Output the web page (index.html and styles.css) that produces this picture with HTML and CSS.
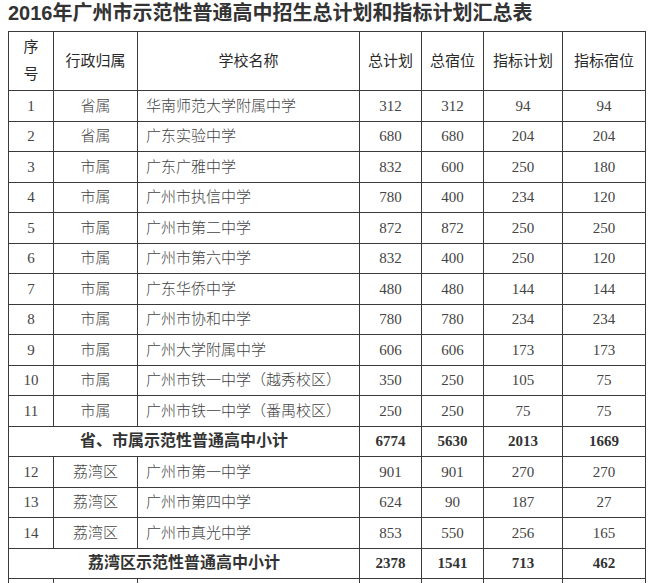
FILE: index.html
```html
<!DOCTYPE html>
<html lang="zh-CN">
<head>
<meta charset="utf-8">
<title>2016年广州市示范性普通高中招生总计划和指标计划汇总表</title>
<link rel="stylesheet" href="styles.css">
</head>
<body>
<h1 class="title">2016年广州市示范性普通高中招生总计划和指标计划汇总表</h1>
<table class="plan">
  <colgroup>
    <col class="c-no"><col class="c-dept"><col class="c-name"><col class="c-total"><col class="c-dorm"><col class="c-quota"><col class="c-qdorm">
  </colgroup>
  <thead>
    <tr class="head">
      <th><span class="stack">序<br>号</span></th>
      <th>行政归属</th>
      <th>学校名称</th>
      <th>总计划</th>
      <th>总宿位</th>
      <th>指标计划</th>
      <th>指标宿位</th>
    </tr>
  </thead>
  <tbody>
    <tr><td>1</td><td>省属</td><td class="name">华南师范大学附属中学</td><td>312</td><td>312</td><td>94</td><td>94</td></tr>
    <tr><td>2</td><td>省属</td><td class="name">广东实验中学</td><td>680</td><td>680</td><td>204</td><td>204</td></tr>
    <tr><td>3</td><td>市属</td><td class="name">广东广雅中学</td><td>832</td><td>600</td><td>250</td><td>180</td></tr>
    <tr><td>4</td><td>市属</td><td class="name">广州市执信中学</td><td>780</td><td>400</td><td>234</td><td>120</td></tr>
    <tr><td>5</td><td>市属</td><td class="name">广州市第二中学</td><td>872</td><td>872</td><td>250</td><td>250</td></tr>
    <tr><td>6</td><td>市属</td><td class="name">广州市第六中学</td><td>832</td><td>400</td><td>250</td><td>120</td></tr>
    <tr><td>7</td><td>市属</td><td class="name">广东华侨中学</td><td>480</td><td>480</td><td>144</td><td>144</td></tr>
    <tr><td>8</td><td>市属</td><td class="name">广州市协和中学</td><td>780</td><td>780</td><td>234</td><td>234</td></tr>
    <tr><td>9</td><td>市属</td><td class="name">广州大学附属中学</td><td>606</td><td>606</td><td>173</td><td>173</td></tr>
    <tr><td>10</td><td>市属</td><td class="name">广州市铁一中学（越秀校区）</td><td>350</td><td>250</td><td>105</td><td>75</td></tr>
    <tr><td>11</td><td>市属</td><td class="name">广州市铁一中学（番禺校区）</td><td>250</td><td>250</td><td>75</td><td>75</td></tr>
    <tr class="sub"><td colspan="3" class="sub-label">省、市属示范性普通高中小计</td><td>6774</td><td>5630</td><td>2013</td><td>1669</td></tr>
    <tr><td>12</td><td>荔湾区</td><td class="name">广州市第一中学</td><td>901</td><td>901</td><td>270</td><td>270</td></tr>
    <tr><td>13</td><td>荔湾区</td><td class="name">广州市第四中学</td><td>624</td><td>90</td><td>187</td><td>27</td></tr>
    <tr><td>14</td><td>荔湾区</td><td class="name">广州市真光中学</td><td>853</td><td>550</td><td>256</td><td>165</td></tr>
    <tr class="sub"><td colspan="3" class="sub-label">荔湾区示范性普通高中小计</td><td>2378</td><td>1541</td><td>713</td><td>462</td></tr>
    <tr><td>&nbsp;</td><td></td><td class="name"></td><td></td><td></td><td></td><td></td></tr>
  </tbody>
</table>
</body>
</html>
```
FILE: styles.css
```css
html, body {
  margin: 0;
  padding: 0;
  background: #ffffff;
}
body {
  padding: 0 8px;
  font-family: "Liberation Serif", "Noto Sans CJK SC", serif;
  color: #444;
}
.title {
  margin: 0 0 5px 0;
  font-family: "Liberation Sans", "Noto Sans CJK SC", sans-serif;
  font-size: 20px;
  line-height: 26px;
  font-weight: 700;
  color: #333;
  white-space: nowrap;
}
.plan {
  border-collapse: collapse;
  table-layout: fixed;
  width: 637px;
}
.c-no { width: 45px; }
.c-dept { width: 84px; }
.c-name { width: 222px; }
.c-total { width: 62px; }
.c-dorm { width: 62px; }
.c-quota { width: 79px; }
.c-qdorm { width: 83px; }
.plan th, .plan td {
  border: 1px solid #3a3a3a;
  padding: 0;
  text-align: center;
  vertical-align: middle;
  font-size: 15px;
  font-weight: 300;
  line-height: 18px;
  white-space: nowrap;
  overflow: hidden;
}
.plan th {
  color: #2a2a2a;
  font-weight: 400;
}
.head {
  height: 59px;
}
.stack {
  display: block;
  line-height: 27px;
}
.plan tbody tr {
  height: 30.5px;
}
.plan td.name {
  text-align: left;
  padding-left: 8px;
}
.sub td {
  font-weight: 700;
  color: #333;
}
.sub .sub-label {
  font-size: 16px;
}
```
